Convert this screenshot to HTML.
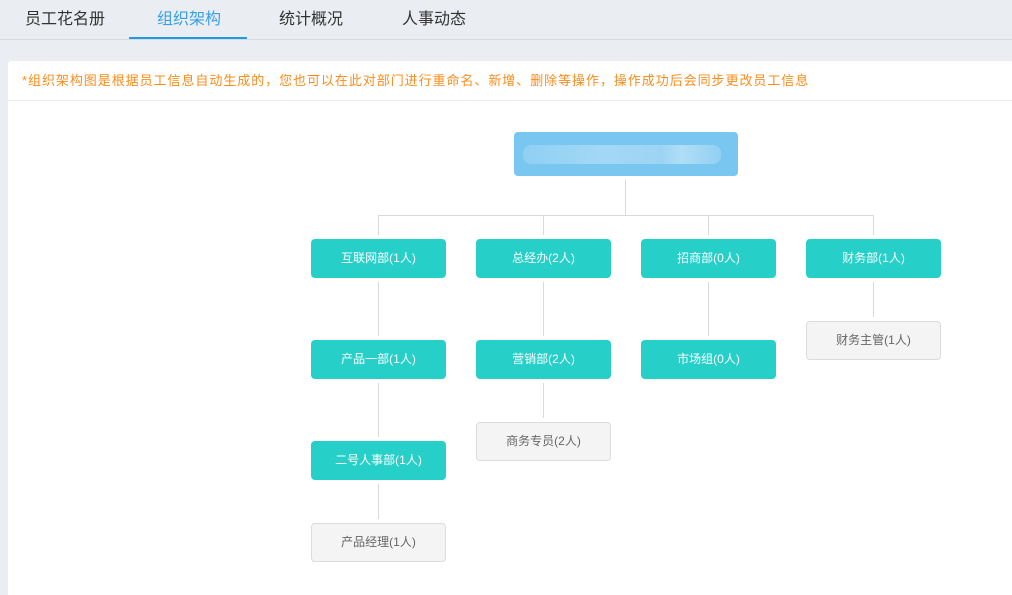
<!DOCTYPE html>
<html><head><meta charset="utf-8"><style>
*{margin:0;padding:0;box-sizing:border-box}
body{width:1012px;height:595px;background:#eaeef2;font-family:"Liberation Sans","Noto Sans CJK SC",sans-serif;position:relative;overflow:hidden}
.tabs{position:absolute;left:0;top:0;width:1012px;height:40px;border-bottom:1px solid #d6dbe0}
.tab{position:absolute;top:10px;font-size:16px;color:#333;line-height:20px}
.tab.on{color:#3aa0e6}
.ul{position:absolute;left:129px;top:37px;width:118px;height:2px;background:#1f9be6}
.card{position:absolute;left:8px;top:61px;width:1004px;height:534px;background:#fff;border-radius:3px 0 0 0}
.note{position:absolute;left:22px;top:72px;font-size:13px;color:#fb8c1a;line-height:18px;letter-spacing:0.95px;white-space:nowrap}
.div{position:absolute;left:8px;top:100px;width:1004px;height:1px;background:#ececec}
.b{position:absolute;width:135px;height:39px;border-radius:4px;font-size:12px;line-height:39px;text-align:center}
.t{background:#26d0c8;color:#fff}
.g{background:#f4f4f4;color:#666;border:1px solid #dcdcdc;line-height:37px}
.v{position:absolute;width:1px;background:#d9d9d9}
.h{position:absolute;height:1px;background:#d9d9d9}
</style></head><body>
<div class="tabs"></div>
<div class="tab" style="left:25px">员工花名册</div>
<div class="tab on" style="left:157px">组织架构</div>
<div class="tab" style="left:279px">统计概况</div>
<div class="tab" style="left:402px">人事动态</div>
<div class="ul"></div>
<div class="card"></div>
<div class="note">*组织架构图是根据员工信息自动生成的，您也可以在此对部门进行重命名、新增、删除等操作，操作成功后会同步更改员工信息</div>
<div class="div"></div>

<div style="position:absolute;left:514px;top:132px;width:224px;height:44px;background:#79c7f0;border-radius:4px"></div>
<div style="position:absolute;left:523px;top:145px;width:198px;height:19px;background:linear-gradient(90deg,#8fd0f3,#a3d8f5 40%,#9dd4f4 70%,#b0def6 80%,#92d0f3);border-radius:8px"></div>

<div class="v" style="left:625px;top:180px;height:35px"></div>
<div class="h" style="left:378px;top:215px;width:496px"></div>
<div class="v" style="left:378px;top:215px;height:20px"></div>
<div class="v" style="left:543px;top:215px;height:20px"></div>
<div class="v" style="left:708px;top:215px;height:20px"></div>
<div class="v" style="left:873px;top:215px;height:20px"></div>

<div class="b t" style="left:311px;top:239px">互联网部(1人)</div>
<div class="b t" style="left:476px;top:239px">总经办(2人)</div>
<div class="b t" style="left:641px;top:239px">招商部(0人)</div>
<div class="b t" style="left:806px;top:239px">财务部(1人)</div>

<div class="v" style="left:378px;top:282px;height:54px"></div>
<div class="v" style="left:543px;top:282px;height:54px"></div>
<div class="v" style="left:708px;top:282px;height:54px"></div>
<div class="v" style="left:873px;top:282px;height:35px"></div>

<div class="b t" style="left:311px;top:340px">产品一部(1人)</div>
<div class="b t" style="left:476px;top:340px">营销部(2人)</div>
<div class="b t" style="left:641px;top:340px">市场组(0人)</div>
<div class="b g" style="left:806px;top:321px">财务主管(1人)</div>

<div class="v" style="left:378px;top:383px;height:54px"></div>
<div class="v" style="left:543px;top:383px;height:35px"></div>

<div class="b t" style="left:311px;top:441px">二号人事部(1人)</div>
<div class="b g" style="left:476px;top:422px">商务专员(2人)</div>

<div class="v" style="left:378px;top:484px;height:35px"></div>
<div class="b g" style="left:311px;top:523px">产品经理(1人)</div>
</body></html>
